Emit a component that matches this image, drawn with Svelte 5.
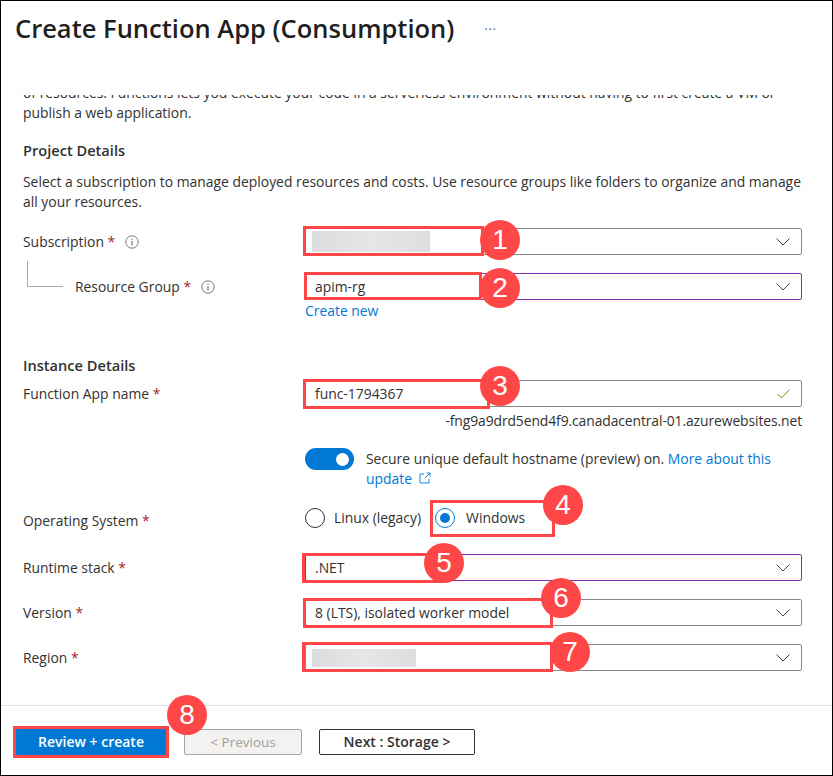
<script>
  // red callouts drawn over the form
  const boxes = [
    { l: 303, t: 226, w: 181, h: 30 },
    { l: 304, t: 272, w: 178, h: 28 },
    { l: 303, t: 379, w: 187, h: 30 },
    { l: 430, t: 500, w: 125, h: 37 },
    { l: 302, t: 553, w: 143, h: 30 },
    { l: 303, t: 598, w: 250, h: 30 },
    { l: 302, t: 642, w: 251, h: 30 },
    { l: 13, t: 726, w: 156, h: 32 },
  ];
  const badges = [
    { n: 1, x: 500, y: 240 },
    { n: 2, x: 500, y: 288 },
    { n: 3, x: 500, y: 386 },
    { n: 4, x: 563, y: 505 },
    { n: 5, x: 444, y: 563 },
    { n: 6, x: 561, y: 598 },
    { n: 7, x: 570, y: 652 },
    { n: 8, x: 187, y: 715 },
  ];
</script>

{#snippet chevron()}
  <svg class="chev" width="14" height="8" viewBox="0 0 14 8" aria-hidden="true">
    <path d="M0.5 0.5 L7 7 L13.5 0.5" fill="none" stroke="#444" stroke-width="1" />
  </svg>
{/snippet}

{#snippet info()}
  <svg class="info" width="14" height="14" viewBox="0 0 14 14" aria-hidden="true">
    <circle cx="7" cy="7" r="6.2" fill="none" stroke="#777" stroke-width="1" />
    <path d="M7 6 V10.4" stroke="#666" stroke-width="1.1" />
    <circle cx="7" cy="4.2" r="0.7" fill="#666" />
  </svg>
{/snippet}

<div class="page">
  <header class="head">
    <h1>Create Function App (Consumption)</h1>
    <span class="more">···</span>
  </header>

  <main class="content">
    <p class="intro">of resources. Functions lets you execute your code in a serverless environment without having to first create a VM or<br />publish a web application.</p>

    <h2 class="project">Project Details</h2>
    <p class="desc">Select a subscription to manage deployed resources and costs. Use resource groups like folders to organize and manage all your resources.</p>

    <div class="row sub">
      <div class="label">Subscription <b>*</b>{@render info()}</div>
      <div class="field"><span class="redact r1"></span>{@render chevron()}</div>
    </div>
    <div class="row rg">
      <div class="label nested"><span class="tree"></span>Resource Group <b>*</b>{@render info()}</div>
      <div class="field focus">apim-rg{@render chevron()}</div>
    </div>
    <div class="create"><a href="#new">Create new</a></div>

    <h2 class="instance">Instance Details</h2>
    <div class="row name">
      <div class="label">Function App name <b>*</b></div>
      <div class="field">func-1794367
        <svg class="chev" width="13" height="10" viewBox="0 0 13 10" aria-hidden="true">
          <path d="M0.5 5 L4.5 9 L12.5 0.5" fill="none" stroke="#57a300" stroke-width="1" />
        </svg>
      </div>
    </div>
    <div class="suffix">-fng9a9drd5end4f9.canadacentral-01.azurewebsites.net</div>

    <div class="toggle-row">
      <span class="toggle"><i></i></span>
      <p>Secure unique default hostname (preview) on. <a href="#more">More about this update
        <svg class="ext" width="12" height="12" viewBox="0 0 12 12" aria-hidden="true">
          <path d="M5 2 H1 V11 H10 V7 M6 6 L11 1 M7.5 1 H11 V4.5" fill="none" stroke="#0078d4" stroke-width="0.9" />
        </svg></a></p>
    </div>

    <div class="row os">
      <div class="label">Operating System <b>*</b></div>
      <div class="radios">
        <span class="radio"><span class="dot"></span>Linux (legacy)</span>
        <span class="radio on"><span class="dot"></span>Windows</span>
      </div>
    </div>

    <div class="row stack">
      <div class="label">Runtime stack <b>*</b></div>
      <div class="field focus">.NET{@render chevron()}</div>
    </div>
    <div class="row">
      <div class="label">Version <b>*</b></div>
      <div class="field">8 (LTS), isolated worker model{@render chevron()}</div>
    </div>
    <div class="row">
      <div class="label">Region <b>*</b></div>
      <div class="field"><span class="redact r2"></span>{@render chevron()}</div>
    </div>
  </main>

  <footer class="foot">
    <button class="primary">Review + create</button>
    <button class="prev" disabled>&lt; Previous</button>
    <button class="next">Next : Storage &gt;</button>
  </footer>

  {#each boxes as b}
    <div class="box" style="left:{b.l}px;top:{b.t}px;width:{b.w}px;height:{b.h}px"></div>
  {/each}
  {#each badges as b}
    <div class="badge" style="left:{b.x - 20}px;top:{b.y - 20}px">{b.n}</div>
  {/each}
</div>

<style>
  :global(body) {
    margin: 0;
    background: #fff;
  }

  .page {
    position: relative;
    box-sizing: border-box;
    width: 833px;
    height: 776px;
    border: 1px solid #000;
    display: flex;
    flex-direction: column;
    overflow: hidden;
    background: #fff;
    color: #323130;
    font: 14px/20px "Open Sans", "Noto Sans", sans-serif;
  }

  .head {
    height: 94px;
    flex: none;
    display: flex;
    align-items: flex-start;
    padding: 8px 0 0 14px;
    box-sizing: border-box;
  }

  h1 {
    margin: 0;
    font-size: 25.5px;
    line-height: 38px;
    font-weight: 600;
    color: #1f1f1f;
  }

  .more {
    margin: 12px 0 0 30px;
    font-size: 12px;
    line-height: 18px;
    letter-spacing: 1px;
    color: #555;
  }

  .content {
    flex: 1;
    overflow: hidden;
    padding: 0 30px 0 22px;
    font-size: 13.9px;
  }

  .intro {
    margin: -12px 0 0;
  }

  .desc {
    margin: 0 0 16px;
  }

  h2 {
    margin: 0;
    font-size: 14.6px;
    font-weight: 600;
    line-height: 20px;
  }

  .project {
    margin: 17px 0 12px;
  }

  .instance {
    margin: 34px 0 5px;
  }

  .row {
    display: grid;
    grid-template-columns: 282px 1fr;
    align-items: center;
    margin-bottom: 18px;
  }

  .rg {
    margin-bottom: 1px;
  }

  .name {
    margin-bottom: 0;
  }

  .label {
    display: flex;
    align-items: center;
    white-space: pre;
  }

  .label b {
    color: #a4262c;
    font-weight: 400;
  }

  .info {
    margin-left: 10px;
  }

  .nested {
    position: relative;
    padding-left: 52px;
  }

  .tree {
    position: absolute;
    left: 4px;
    top: -16px;
    width: 35px;
    height: 25px;
    border-left: 1px solid #aaa;
    border-bottom: 1px solid #aaa;
  }

  .field {
    box-sizing: border-box;
    height: 27px;
    border: 1px solid #8a8886;
    border-radius: 2px;
    display: flex;
    align-items: center;
    justify-content: space-between;
    padding: 0 11px 0 9px;
  }

  .focus {
    border-color: #8c2cb0;
  }

  .chev {
    flex: none;
  }

  .redact {
    display: block;
    margin-left: -3px;
    background: linear-gradient(90deg, #dcdcdc, #e6e6e6 50%, #dedede);
  }

  .r1 {
    width: 118px;
    height: 21px;
  }

  .r2 {
    width: 104px;
    height: 18px;
  }

  .create {
    margin-left: 282px;
    line-height: 20px;
  }

  a {
    color: #0078d4;
    text-decoration: none;
  }

  .ext {
    margin-left: 3px;
  }

  .suffix {
    text-align: right;
    margin-top: 4px;
    letter-spacing: -0.1px;
  }

  .toggle-row {
    display: flex;
    margin: 17px 0 0 282px;
    gap: 12px;
  }

  .toggle-row p {
    margin: 1px 0 -1px;
    flex: 1;
  }

  .toggle {
    flex: none;
    width: 49px;
    height: 22px;
    border-radius: 11px;
    background: #0078d4;
    display: flex;
    align-items: center;
    justify-content: flex-end;
    padding-right: 5px;
    box-sizing: border-box;
  }

  .toggle i {
    width: 13px;
    height: 13px;
    border-radius: 50%;
    background: #fff;
  }

  .os {
    align-items: start;
    margin: 20px 0 23px;
  }

  .os .label {
    margin-top: 3px;
  }

  .radios {
    display: flex;
    gap: 14px;
  }

  .radio {
    display: flex;
    align-items: center;
    gap: 9px;
  }

  .on {
    gap: 11px;
  }

  .dot {
    box-sizing: border-box;
    width: 20px;
    height: 20px;
    border-radius: 50%;
    border: 1px solid #323130;
    display: flex;
    align-items: center;
    justify-content: center;
  }

  .on .dot {
    border-color: #0078d4;
  }

  .on .dot::after {
    content: "";
    width: 10px;
    height: 10px;
    border-radius: 50%;
    background: #0078d4;
  }

  .foot {
    flex: none;
    height: 70px;
    box-sizing: border-box;
    border-top: 1px solid #e1e1e1;
    padding: 23px 0 0 14px;
    display: flex;
    align-items: flex-start;
  }

  button {
    box-sizing: border-box;
    height: 26px;
    border-radius: 2px;
    font: 600 14px/20px "Open Sans", "Noto Sans", sans-serif;
    padding: 0;
  }

  .primary {
    width: 152px;
    background: #0078d4;
    color: #fff;
    border: none;
  }

  .prev {
    width: 118px;
    margin-left: 17px;
    background: #f3f2f1;
    border: 1px solid #a6a6a6;
    color: #a19f9d;
    font-size: 13.5px;
    font-weight: 400;
  }

  .next {
    width: 156px;
    margin-left: 17px;
    background: #fff;
    border: 1px solid #323130;
    color: #323130;
  }

  .box {
    position: absolute;
    margin: -1px 0 0 -1px;
    box-sizing: border-box;
    border: 3px solid #ff4747;
  }

  .badge {
    position: absolute;
    margin: -1px 0 0 -1px;
    width: 40px;
    height: 40px;
    border-radius: 50%;
    background: #ff4747;
    color: #fff;
    font: 28px/40px "Liberation Sans", Arial, sans-serif;
    text-align: center;
  }
</style>
